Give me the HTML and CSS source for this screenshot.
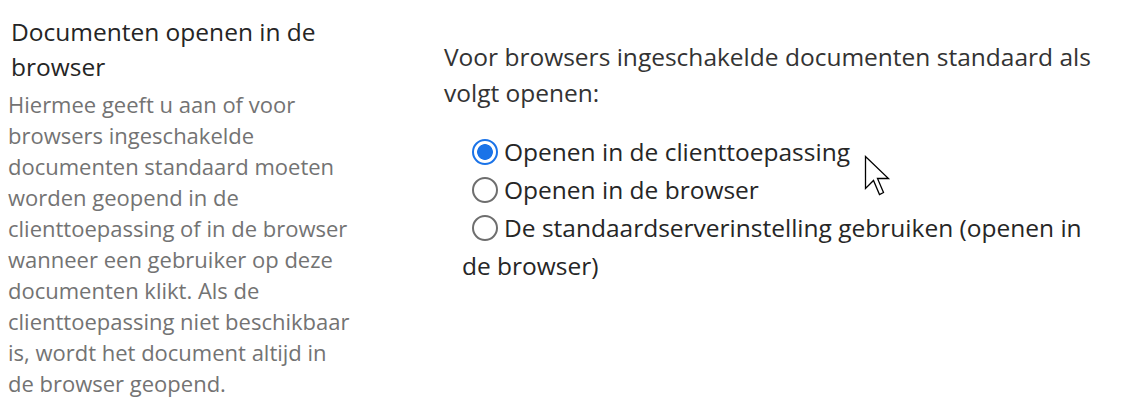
FILE: index.html
```html
<!DOCTYPE html>
<html lang="nl">
<head>
<meta charset="utf-8">
<link rel="stylesheet" href="styles.css">
</head>
<body>
<div class="page">
  <div class="left">
    <div class="title">Documenten openen in de browser</div>
    <div class="desc">Hiermee geeft u aan of voor browsers ingeschakelde documenten standaard moeten worden geopend in de clienttoepassing of in de browser wanneer een gebruiker op deze documenten klikt. Als de clienttoepassing niet beschikbaar is, wordt het document altijd in de browser geopend.</div>
  </div>
  <div class="right">
    <div class="intro">Voor browsers ingeschakelde documenten standaard als volgt openen:</div>
    <div class="options">
      <div class="opt"><span class="radio checked"></span>Openen in de clienttoepassing</div>
      <div class="opt"><span class="radio"></span>Openen in de browser</div>
      <div class="opt"><span class="radio"></span>De standaardserverinstelling gebruiken (openen in de browser)</div>
    </div>
  </div>
</div>
<svg class="cursor" width="28" height="42" viewBox="0 0 28 42"><path d="M1.5 1.5 L1.5 33.5 L9.5 25.5 L15.5 39.5 L19.5 37.5 L13.5 23.5 L24.5 23.5 Z" fill="#fff" stroke="#000" stroke-width="1.3" stroke-linejoin="miter"/></svg>
</body>
</html>
```
FILE: styles.css
```css
html, body { margin: 0; padding: 0; background: #fff; }
body { font-family: "Open Sans", "Noto Sans", sans-serif; position: relative; width: 1145px; height: 418px; overflow: hidden; }
.page { display: flex; padding-top: 14px; }
.left { width: 345.5px; padding-left: 11px; margin-right: 14.5px; flex: none; }
.title { font-size: 24.5px; line-height: 35px; color: #252525; }
.desc { font-size: 22px; line-height: 31px; color: #737373; margin-left: -3px; margin-top: 5px; }
.right { margin-left: 73px; padding-top: 25px; width: 656px; flex: none; }
.intro { font-size: 24.5px; line-height: 36px; color: #333; }
.options { margin-top: 22px; padding-left: 18px; font-size: 24.5px; line-height: 38px; color: #262626; }
.radio { display: inline-block; width: 26px; height: 26px; border: 2px solid #6e6e6e; border-radius: 50%; vertical-align: -4px; margin-left: 10px; margin-right: 6px; box-sizing: border-box; }
.radio.checked { border: 2.5px solid #1a73e8; background: radial-gradient(circle, #1a73e8 0 7.5px, #fff 8.2px); }
.cursor { position: absolute; left: 864px; top: 155px; }
```
